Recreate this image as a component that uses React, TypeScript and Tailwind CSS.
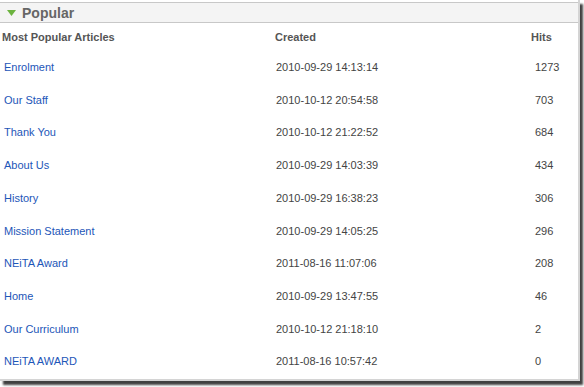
import React from "react";

interface Article {
  title: string;
  created: string;
  hits: number;
}

const articles: Article[] = [
  { title: "Enrolment", created: "2010-09-29 14:13:14", hits: 1273 },
  { title: "Our Staff", created: "2010-10-12 20:54:58", hits: 703 },
  { title: "Thank You", created: "2010-10-12 21:22:52", hits: 684 },
  { title: "About Us", created: "2010-09-29 14:03:39", hits: 434 },
  { title: "History", created: "2010-09-29 16:38:23", hits: 306 },
  { title: "Mission Statement", created: "2010-09-29 14:05:25", hits: 296 },
  { title: "NEiTA Award", created: "2011-08-16 11:07:06", hits: 208 },
  { title: "Home", created: "2010-09-29 13:47:55", hits: 46 },
  { title: "Our Curriculum", created: "2010-10-12 21:18:10", hits: 2 },
  { title: "NEiTA AWARD", created: "2011-08-16 10:57:42", hits: 0 },
];

const App: React.FC = () => {
  return (
    <div className="w-[584px] h-[387px] bg-white font-['Liberation_Sans',Arial,sans-serif]">
      <div className="w-[580px] h-[381px] bg-white border-r-[2px] border-b-[2px] border-[#d4d4d4] shadow-[3px_4px_2px_rgba(0,0,0,0.75)] overflow-hidden">
        <div className="mt-[2px] h-[21px] bg-[#f4f4f4] border-y border-[#c8c8c8] flex items-center">
          <svg width="9" height="6" viewBox="0 0 9 6" className="ml-[7px] mt-[1px]">
            <polygon points="0,0 9,0 4.5,6" fill="#6cb33f" />
          </svg>
          <span className="ml-[6px] text-[14px] font-bold text-[#666] leading-none">
            Popular
          </span>
        </div>
        <div className="flex h-[23px] items-end text-[11px] font-bold text-[#555] pb-[1px]">
          <div className="w-[273px] pl-[2px]">Most Popular Articles</div>
          <div className="w-[258px] pl-[2px]">Created</div>
          <div>Hits</div>
        </div>
        <div className="pt-[5px]">
          {articles.map((a) => (
            <div key={a.title} className="flex h-[32.7px] items-center text-[11px]">
              <a className="w-[273px] pl-[4px] text-[#1d56b8] cursor-pointer">{a.title}</a>
              <div className="w-[258px] pl-[3px] text-[#444]">{a.created}</div>
              <div className="pl-[4px] text-[#444]">{a.hits}</div>
            </div>
          ))}
        </div>
      </div>
    </div>
  );
};

export default App;
